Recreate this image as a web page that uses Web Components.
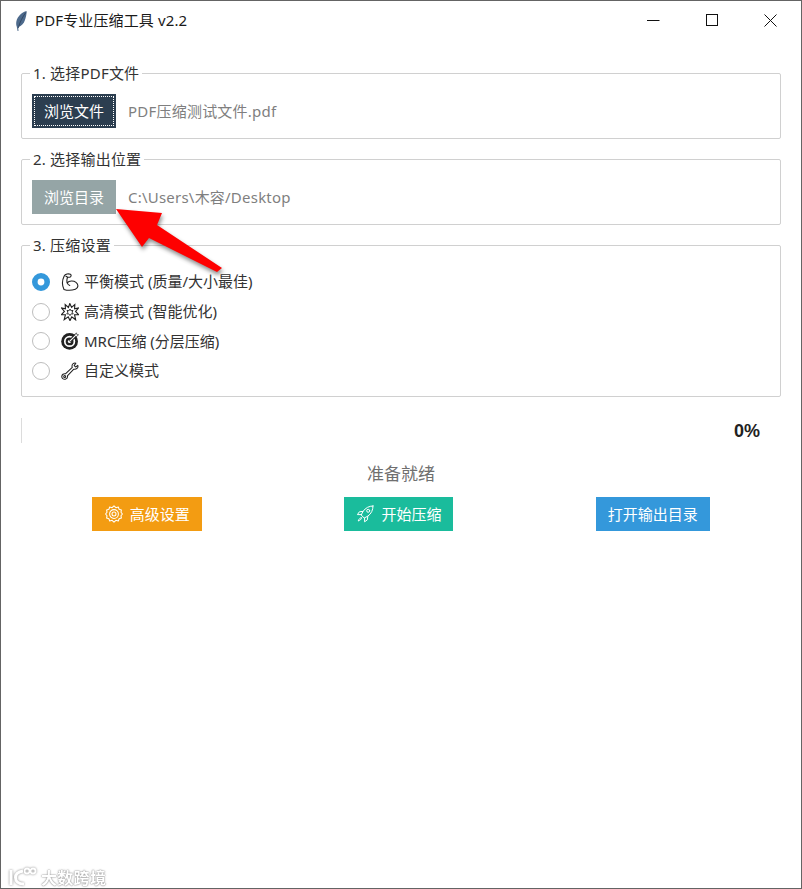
<!DOCTYPE html>
<html lang="zh-CN">
<head>
<meta charset="utf-8">
<title>PDF专业压缩工具 v2.2</title>
<style>
html,body{margin:0;padding:0;background:#fff;}
body{font-family:"Noto Sans","Noto Sans CJK SC",sans-serif;}
</style>
</head>
<body>
<app-window>
  <title-bar slot="title">PDF专业压缩工具 v2.2</title-bar>
  <group-box label="1. 选择PDF文件">
    <path-row><app-button variant="dark" focused>浏览文件</app-button><span slot="value">PDF压缩测试文件.pdf</span></path-row>
  </group-box>
  <group-box label="2. 选择输出位置">
    <path-row><app-button variant="muted">浏览目录</app-button><span slot="value">C:\Users\木容/Desktop</span></path-row>
  </group-box>
  <group-box label="3. 压缩设置" tight>
    <radio-row checked icon="biceps">平衡模式 (质量/大小最佳)</radio-row>
    <radio-row icon="burst">高清模式 (智能优化)</radio-row>
    <radio-row icon="target">MRC压缩 (分层压缩)</radio-row>
    <radio-row icon="wrench">自定义模式</radio-row>
  </group-box>
  <progress-line value="0%"></progress-line>
  <status-text>准备就绪</status-text>
  <action-bar>
    <app-button variant="orange" action icon="gear" style="width:110px">高级设置</app-button>
    <app-button variant="teal" action icon="rocket">开始压缩</app-button>
    <app-button variant="blue" action>打开输出目录</app-button>
  </action-bar>
  <red-arrow slot="overlay"></red-arrow>
  <water-mark slot="overlay">大数跨境</water-mark>
</app-window>
<script>
const ICONS = {
  biceps:`<svg width="18" height="18" viewBox="0 0 18 18" fill="none" stroke="#222" stroke-width="1.1" stroke-linejoin="round" stroke-linecap="round"><path d="M3 16.400C1 12.400 1.200 7 3.200 3C4.200 1 7.600.4 9.400 1.300C10.600 2 10.200 4 8.600 4.300L6.600 4.300C5.800 6 5.700 8 6.200 9.800C8.200 7.600 12.400 7.400 15 9.400C17.600 11.400 17.600 15 14.400 16.200C10.400 17.600 6.400 17.600 3 16.400Z"/><path d="M5 3.200C5.600 3.600 6.200 3.900 6.600 4.300M6.200 9.800C6.600 11 7.600 12 8.800 12.400"/></svg>`,
  burst:`<svg width="18" height="18" viewBox="0 0 18 18" fill="#fff" stroke="#222" stroke-width="1.150" stroke-linejoin="miter" stroke-miterlimit="8"><path d="M8.800.6L10.600 4.400L13.800 1.600L13.600 5.800L17.400 5L14.600 8.400L17.600 11.600L13.600 11.800L14.600 16.800L10.800 13.800L9 17.600L7.200 13.800L3.200 16.600L4.400 11.800L.4 11.600L3.400 8.400L.6 5L4.400 5.800L4.200 1.600L7.400 4.400Z"/><path d="M9 6L10 7.800L12 7.400L11.200 9.200L12.200 11L10.200 10.800L9 12.600L7.800 10.800L5.800 11L6.800 9.200L6 7.400L8 7.800Z" stroke-width=".9"/></svg>`,
  target:`<svg width="18" height="18" viewBox="0 0 18 18"><circle cx="8.600" cy="9.400" r="8.400" fill="#222"/><circle cx="8.600" cy="9.400" r="4.800" fill="none" stroke="#fff" stroke-width="1.700"/><circle cx="8.600" cy="9.400" r="1.700" fill="#fff"/><path d="M8.600 9.400L15.400 2.600" stroke="#222" stroke-width="3"/><path d="M8.600 9.400L15.200 2.800" stroke="#fff" stroke-width="1.100"/><path d="M13.400 3.400L15.400.8L15.800 2.400L17.600 2.800L15 4.800Z" fill="#fff" stroke="#222" stroke-width=".6"/></svg>`,
  wrench:`<svg width="18" height="18" viewBox="0 0 18 18" fill="#fff" stroke="#222" stroke-width="1.050" stroke-linejoin="round"><path d="M16.800 3.400L14.600 5L13.200 3.600L14.800 1.200C12.800.6 11 2 11 4C11 4.600 11.100 5 11.300 5.400L4.400 11.800C2.600 11.400 1 12.600 .8 14.400C.6 16.200 2.400 17.800 4.400 17.200C6 16.700 6.800 15.200 6.400 13.800L12.800 7.200C15.200 7.800 17.600 5.800 16.800 3.400Z"/><circle cx="3.700" cy="14.400" r="1"/></svg>`,
  gear:`<svg width="18" height="18" viewBox="0 0 18 18" fill="none" stroke="#fff" stroke-width="1.050"><path d="M9 .8L10.900 2.700L13.300 2L14.100 4.200L16.400 4.900L16 7.200L17.400 9L16 10.800L16.400 13.100L14.100 13.800L13.300 16L10.900 15.300L9 17.200L7.100 15.300L4.700 16L3.900 13.800L1.600 13.100L2 10.800L.6 9L2 7.200L1.600 4.900L3.900 4.200L4.700 2L7.100 2.700Z" stroke-linejoin="round"/><circle cx="9" cy="9" r="4.400"/><circle cx="9" cy="9" r="2"/></svg>`,
  rocket:`<svg width="18" height="18" viewBox="0 0 18 18" fill="none" stroke="#fff" stroke-width="1" stroke-linejoin="round" stroke-linecap="round"><path d="M17 1C13 1 9.600 2.800 7 6.400L5.200 10L8.200 13L11.800 11.200C15.400 8.600 17 5 17 1Z"/><circle cx="12.200" cy="5.800" r="1.500"/><path d="M7 6.400L3.400 6.800L1.400 9.600L5 9.600M11.800 11.200L11.400 14.800L8.600 16.800L8.600 13.400M5.200 12.600C3.800 13 2.800 14.200 2.200 16C4 15.400 5.200 14.400 5.600 13"/></svg>`
};

class Base extends HTMLElement {
  render(html){ if(!this.shadowRoot) this.attachShadow({mode:'open'}); this.shadowRoot.innerHTML = html; }
}
customElements.define('app-window', class extends Base {
  connectedCallback(){ this.render(`<style>
    :host{display:flex;flex-direction:column;position:relative;box-sizing:border-box;width:802px;height:889px;border:1px solid #646464;background:#fff;overflow:hidden;color:#333}
    .content{display:flex;flex-direction:column;padding:22px 20px 0}
  </style><slot name="title"></slot><div class="content"><slot></slot></div><slot name="overlay"></slot>`); }
});
customElements.define('title-bar', class extends Base {
  connectedCallback(){ this.render(`<style>
    :host{display:flex;align-items:center;height:40px;flex:none;color:#1a1a1a;font-size:15px;letter-spacing:.13px}
    .ic{width:14px;height:22px;margin:0 0 0 13px;flex:none}
    .t{margin-left:7px;flex:1;padding-bottom:4px}
    .b{width:58.500px;height:36px;display:flex;align-items:center;justify-content:center;flex:none;padding-bottom:1px;box-sizing:border-box}
    .ctl{display:flex;margin-right:1px}
  </style>
  <svg class="ic" viewBox="0 0 14 22"><path d="M12.600 1C8.400 1.800 3.600 6 2.400 11.200C2 13.200 2.200 15 2.800 16.800C3 17.800 3.400 19.800 3.600 21L4.500 21C4.400 19.600 4.200 18 4.400 17C7.400 16 9.800 14 10.800 10.600C11.800 7.600 12.800 3.800 12.600 1Z" fill="#4d6a8c"/><path d="M11.800 2.500C8.500 7 5.800 12 4.300 18" stroke="#2b3f58" stroke-width=".8" fill="none"/></svg>
  <span class="t"><slot></slot></span>
  <div class="ctl">
    <div class="b"><svg width="13" height="13" viewBox="0 0 13 13"><path d="M0 6.500H12.500" stroke="#111" stroke-width="1"/></svg></div>
    <div class="b"><svg width="13" height="13" viewBox="0 0 13 13"><rect x=".5" y=".5" width="11" height="11" fill="none" stroke="#111" stroke-width="1"/></svg></div>
    <div class="b"><svg width="13" height="13" viewBox="0 0 13 13"><path d="M.5.500L12.500 12.500M12.500.500L.5 12.500" stroke="#111" stroke-width="1"/></svg></div>
  </div>`); }
});
customElements.define('group-box', class extends Base {
  connectedCallback(){ this.render(`<style>
    :host{display:block;margin-bottom:10px}
    fieldset{margin:0;border:1px solid #d0d0d0;border-radius:2px;padding:11px 10px 10px 10px;min-width:0;height:auto}
    legend{margin-left:-2px;padding:0 3px;height:20px;line-height:20px;font-size:15px;color:#333;letter-spacing:.2px}
    :host([tight]) fieldset{padding-top:12px;padding-bottom:10px}
  </style><fieldset><legend>${this.getAttribute('label')}</legend><slot></slot></fieldset>`); }
});
customElements.define('path-row', class extends Base {
  connectedCallback(){ this.render(`<style>
    :host{display:flex;align-items:center;gap:12px;color:#7f7f7f;font-size:15px}
    ::slotted(span){letter-spacing:.22px;padding-bottom:2px}
  </style><slot></slot><slot name="value"></slot>`); }
});
customElements.define('app-button', class extends Base {
  connectedCallback(){
    const colors={dark:'#2c3e50',muted:'#95a5a6',orange:'#f39c12',teal:'#1abc9c',blue:'#3498db'};
    const icon=this.getAttribute('icon');
    this.render(`<style>
      :host{display:inline-flex;align-items:center;justify-content:center;position:relative;box-sizing:border-box;background:${colors[this.getAttribute('variant')]};color:#fff;font-size:15px;width:84px;height:34px;flex:none}
      :host([action]){padding:0 12px;width:auto;height:34px}
      svg{margin-right:7px;flex:none}
      .f{position:absolute;inset:2px;border:1px dotted #fff}
      .t{padding-bottom:1px}
    </style>${this.hasAttribute('focused')?'<div class="f"></div>':''}${icon?ICONS[icon]:''}<span class="t"><slot></slot></span>`);
  }
});
customElements.define('radio-row', class extends Base {
  connectedCallback(){
    const c=this.hasAttribute('checked');
    this.render(`<style>
      :host{display:flex;align-items:center;height:29.700px;font-size:15px;color:#333}
      .r{width:18px;height:18px;flex:none;margin-right:11px}
      .i{width:18px;height:18px;flex:none;margin-right:5px}
      .t{padding-bottom:2px}
    </style>
    <svg class="r" viewBox="0 0 18 18">${c?'<circle cx="9" cy="9" r="6.200" fill="#fff" stroke="#3498db" stroke-width="5.600"/>':'<circle cx="9" cy="9" r="8.500" fill="#fff" stroke="#bdbdbd" stroke-width="1"/>'}</svg>
    <span class="i">${ICONS[this.getAttribute('icon')]}</span><span class="t"><slot></slot></span>`);
  }
});
customElements.define('progress-line', class extends Base {
  connectedCallback(){ this.render(`<style>
    :host{display:flex;align-items:center;justify-content:space-between;height:25px;margin-top:11px;padding-right:21px;color:#222}
    .bar{width:1px;height:25px;background:#dcdcdc}
    .v{font:bold 18px "Liberation Sans",sans-serif;margin-top:3px}
  </style><div class="bar"></div><span class="v">${this.getAttribute('value')}</span>`); }
});
customElements.define('status-text', class extends Base {
  connectedCallback(){ this.render(`<style>
    :host{display:block;text-align:center;font-size:17px;color:#6f6f6f;line-height:24px;margin-top:19px}
  </style><slot></slot>`); }
});
customElements.define('action-bar', class extends Base {
  connectedCallback(){ this.render(`<style>
    :host{display:flex;justify-content:space-around;margin-top:11px}
  </style><slot></slot>`); }
});
customElements.define('red-arrow', class extends Base {
  connectedCallback(){ this.render(`<style>
    :host{position:absolute;left:100px;top:195px;width:140px;height:90px;pointer-events:none}
    svg{display:block;overflow:visible;filter:drop-shadow(1px 3px 2px rgba(0,0,0,.45))}
  </style><svg width="140" height="90" viewBox="101 196 140 90"><path d="M116 209L162 213L157 225L222 268L217 272L149 238L142 247Z" fill="#fe0000"/></svg>`); }
});
customElements.define('water-mark', class extends Base {
  connectedCallback(){ this.render(`<style>
    :host{position:absolute;left:6px;top:862px;display:flex;align-items:center;color:#fff;font-size:16px;font-weight:700;letter-spacing:.3px;text-shadow:0 0 2px #777,0 0 1px #777;opacity:.85;pointer-events:none}
    svg{margin-right:2px;filter:drop-shadow(0 0 1px #777)}
    span{padding-top:2px}
  </style><svg width="32" height="21" viewBox="0 0 32 21" fill="none" stroke="#fff" stroke-width="3"><path d="M4 4V19"/><path d="M16 5C10 6 8.500 9 8.500 11.500C8.500 15 11 18 17 18"/><circle cx="20" cy="5" r="2.500" stroke-width="1.800"/><circle cx="26" cy="5" r="2.500" stroke-width="1.800"/></svg><span><slot></slot></span>`); }
});
</script>
</body>
</html>
